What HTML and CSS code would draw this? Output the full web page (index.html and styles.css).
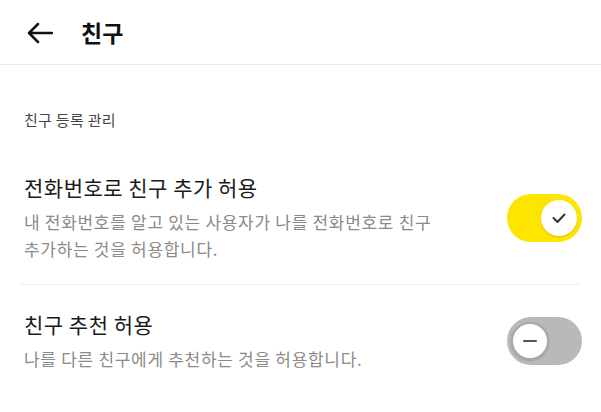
FILE: index.html
```html
<!DOCTYPE html>
<html>
<head>
<meta charset="utf-8">
<title>친구</title>
<link rel="stylesheet" href="styles.css">
</head>
<body>
	<div class="top_bar">
		<a class="back_btn">
			<svg width="27" height="22" viewBox="0 0 27 22">
				<path d="M12 2 L3 11 L12 20 M3 11 L26 11" fill="none" stroke="#111" stroke-width="2.5" stroke-linecap="round" stroke-linejoin="round"/>
			</svg>
		</a>
		<h1 class="top_title">친구</h1>
	</div>

	<p class="group_title">친구 등록 관리</p>

	<ul class="set_list">
		<li class="set_item">
			<div class="set_text">
				<h2>전화번호로 친구 추가 허용</h2>
				<p>내 전화번호를 알고 있는 사용자가 나를 전화번호로 친구 추가하는 것을 허용합니다.</p>
			</div>
			<span class="switch on">
				<span class="knob">
					<svg width="16" height="12" viewBox="0 0 16 12">
						<path d="M2.5 6 L6.5 10 L13.5 2.5" fill="none" stroke="#333" stroke-width="2" stroke-linecap="round" stroke-linejoin="round"/>
					</svg>
				</span>
			</span>
		</li>
		<li class="set_item">
			<div class="set_text">
				<h2>친구 추천 허용</h2>
				<p>나를 다른 친구에게 추천하는 것을 허용합니다.</p>
			</div>
			<span class="switch off">
				<span class="knob">
					<svg width="16" height="4" viewBox="0 0 16 4">
						<path d="M2 2 L14 2" fill="none" stroke="#555" stroke-width="2" stroke-linecap="round"/>
					</svg>
				</span>
			</span>
		</li>
	</ul>
</body>
</html>
```

FILE: styles.css
```css
html, body, p, h1, h2, ul, li {
	padding: 0;
	margin: 0;
}

body {
	background: #fff;
	font-family: "Noto Sans CJK KR", "Noto Sans", sans-serif;
	color: #1a1a1a;
}

li {
	list-style: none;
}

a {
	cursor: pointer;
}

/* 상단 바 */
.top_bar {
	height: 64px;
	display: flex;
	align-items: center;
	padding-left: 26px;
	border-bottom: 1px solid #ececec;
}

.back_btn {
	display: flex;
	width: 27px;
	height: 22px;
	margin-top: 2px;
}

.top_title {
	margin-left: 28px;
	font-size: 23px;
	font-weight: 700;
	line-height: 30px;
	color: #111;
}

.group_title {
	padding: 45px 0 0 24px;
	font-size: 15px;
	line-height: 20px;
	letter-spacing: 0.3px;
	color: #444;
}

/* 설정 목록 */
.set_list {
	padding-top: 43px;
}

.set_item {
	display: flex;
	align-items: center;
	margin: 0 20px;
	padding: 0 0 22px 4px;
}

.set_item + .set_item {
	border-top: 1px solid #f0f0f0;
	padding-top: 25px;
}

.set_text {
	flex: 1;
	word-break: keep-all;
}

.set_text h2 {
	font-size: 21px;
	font-weight: 400;
	line-height: 28px;
	letter-spacing: 0.5px;
	color: #1a1a1a;
}

.set_text p {
	max-width: 430px;
	margin-top: 7px;
	font-size: 17px;
	line-height: 27px;
	letter-spacing: 0.7px;
	color: #8a8a8a;
}

/* 스위치 */
.switch {
	width: 75px;
	height: 48px;
	border-radius: 24px;
	display: flex;
	align-items: center;
	padding: 0 5px;
	box-sizing: border-box;
	margin-right: -1px;
}

.switch.on {
	background: #fde500;
	justify-content: flex-end;
}

.switch.off {
	background: #b9b9b9;
	justify-content: flex-start;
}

.knob {
	width: 36px;
	height: 36px;
	border-radius: 50%;
	background: #fff;
	display: flex;
	align-items: center;
	justify-content: center;
	box-shadow: 0 1px 2px rgba(0, 0, 0, 0.15);
	box-sizing: border-box;
}

.switch.off .knob {
	border: 2px solid #a8a8a8;
	width: 38px;
	height: 38px;
	margin-left: -1px;
}
```
